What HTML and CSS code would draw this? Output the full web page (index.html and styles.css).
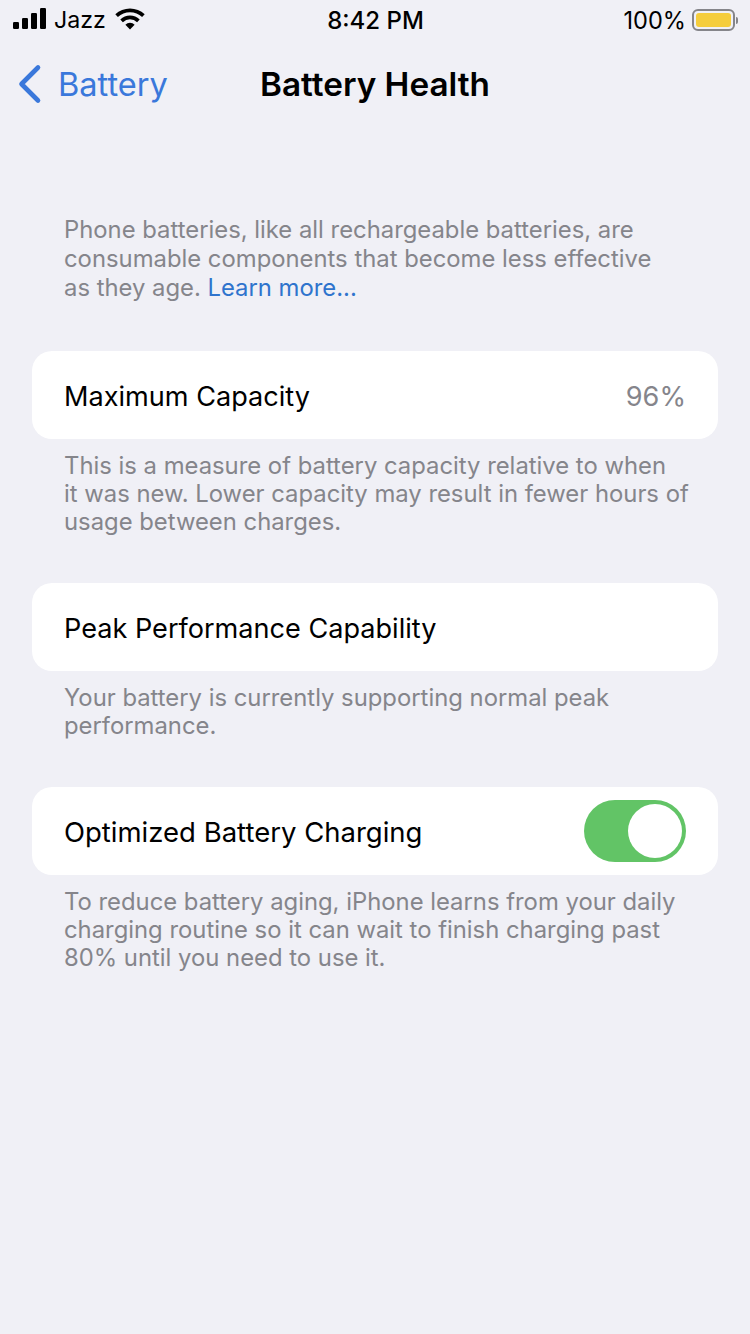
FILE: index.html
```html
<!DOCTYPE html>
<html lang="en">
<head>
  <meta charset="UTF-8">
  <title>Battery Health</title>
  <link rel="stylesheet" href="styles.css">
</head>
<body>

  <!-- Status bar -->
  <div class="status-bar">
    <div class="status-left">
      <svg class="signal" width="34" height="22" viewBox="0 0 34 22">
        <rect x="0" y="14" width="6" height="7" rx="1.2"/>
        <rect x="9" y="10" width="6" height="11" rx="1.2"/>
        <rect x="18" y="5" width="6" height="16" rx="1.2"/>
        <rect x="27" y="0" width="6" height="21" rx="1.2"/>
      </svg>
      <span class="carrier">Jazz</span>
      <svg class="wifi" width="30" height="22" viewBox="0 0 30 22">
        <path d="M15 21.5l-4.6-4.8a6.6 6.6 0 0 1 9.2 0z"/>
        <path d="M7.9 14.2l-2.6-2.7a14 14 0 0 1 19.4 0l-2.6 2.7a10.2 10.2 0 0 0-14.2 0z"/>
        <path d="M2.9 9L.3 6.3a21.3 21.3 0 0 1 29.4 0L27.1 9a17.5 17.5 0 0 0-24.2 0z"/>
      </svg>
    </div>
    <div class="status-time">8:42 PM</div>
    <div class="status-right">
      <span class="percent">100%</span>
      <div class="battery"><div class="battery-fill"></div></div>
      <div class="battery-tip"></div>
    </div>
  </div>

  <!-- Nav bar -->
  <div class="nav-bar">
    <div class="back">
      <svg width="26" height="40" viewBox="0 0 26 40">
        <path d="M21 3.5L4.5 20 21 36.5" fill="none" stroke="#3a78db" stroke-width="4.6" stroke-linecap="round" stroke-linejoin="round"/>
      </svg>
      <span>Battery</span>
    </div>
    <h1>Battery Health</h1>
  </div>

  <!-- Main Content -->
  <div class="content">
    <p class="note intro">Phone batteries, like all rechargeable batteries, are consumable components that become less effective as they age. <span class="link">Learn more...</span></p>

    <div class="row">
      <span>Maximum Capacity</span>
      <span class="value">96%</span>
    </div>
    <p class="note">This is a measure of battery capacity relative to when<br>it was new. Lower capacity may result in fewer hours of usage between charges.</p>

    <div class="row">
      <span>Peak Performance Capability</span>
    </div>
    <p class="note">Your battery is currently supporting normal peak performance.</p>

    <div class="row row-toggle">
      <span>Optimized Battery Charging</span>
      <div class="toggle"><div class="knob"></div></div>
    </div>
    <p class="note">To reduce battery aging, iPhone learns from your daily charging routine so it can wait to finish charging past 80% until you need to use it.</p>
  </div>

</body>
</html>
```

FILE: styles.css
```css
body {
  margin: 0;
  font-family: Inter, 'Liberation Sans', sans-serif;
  background-color: #f0f0f6;
  color: #000;
}

/* Status bar */
.status-bar {
  height: 40px;
  display: grid;
  grid-template-columns: 1fr auto 1fr;
  align-items: center;
  font-size: 24px;
  padding: 0 12px 0 13px;
}

.status-left {
  display: flex;
  align-items: center;
}

.signal {
  margin-top: -2px;
}

.carrier {
  margin-left: 7px;
  font-size: 23.2px;
}

.wifi {
  margin-left: 9px;
  margin-top: -3px;
}

.status-time {
  font-weight: 500;
}

.status-right {
  display: flex;
  align-items: center;
  justify-content: flex-end;
}

.percent {
  margin-right: 6px;
  font-size: 23.6px;
}

.battery {
  width: 43px;
  height: 22px;
  box-sizing: border-box;
  border: 2px solid #85858a;
  border-radius: 6px;
  padding: 2px;
}

.battery-fill {
  height: 100%;
  background-color: #f5cd3c;
  border-radius: 3px;
}

.battery-tip {
  width: 2px;
  height: 7px;
  margin-left: 1px;
  background-color: #85858a;
  border-radius: 0 2px 2px 0;
}

/* Nav bar */
.nav-bar {
  height: 88px;
  display: flex;
  align-items: center;
  justify-content: center;
  position: relative;
}

.nav-bar h1 {
  margin: 0;
  font-size: 33.3px;
  font-weight: 600;
}

.back {
  position: absolute;
  left: 17px;
  top: 24px;
  display: flex;
  align-items: center;
  gap: 15px;
  color: #3a78db;
  font-size: 32.6px;
}

/* Main Content */
.content {
  padding: 0 32px;
}

.row {
  height: 88px;
  box-sizing: border-box;
  padding: 2px 32px 0;
  display: flex;
  align-items: center;
  justify-content: space-between;
  background: white;
  border-radius: 20px;
  font-size: 27.1px;
}

.row-toggle {
  padding-top: 0;
}

.row-toggle span {
  padding-top: 2px;
  font-size: 27.5px;
}

.value {
  color: #85858b;
}

.note {
  margin: 13px 0 47px;
  padding: 0 28px 0 32px;
  font-size: 23.84px;
  line-height: 28px;
  color: #85858b;
}

.intro {
  margin: 87px 0 49px;
  padding-right: 40px;
  line-height: 29px;
}

.link {
  color: #2f74cd;
}

.toggle {
  width: 102px;
  height: 62px;
  box-sizing: border-box;
  padding: 4px;
  display: flex;
  justify-content: flex-end;
  background-color: #62c466;
  border-radius: 31px;
}

.knob {
  width: 54px;
  height: 54px;
  background: white;
  border-radius: 50%;
}
```
